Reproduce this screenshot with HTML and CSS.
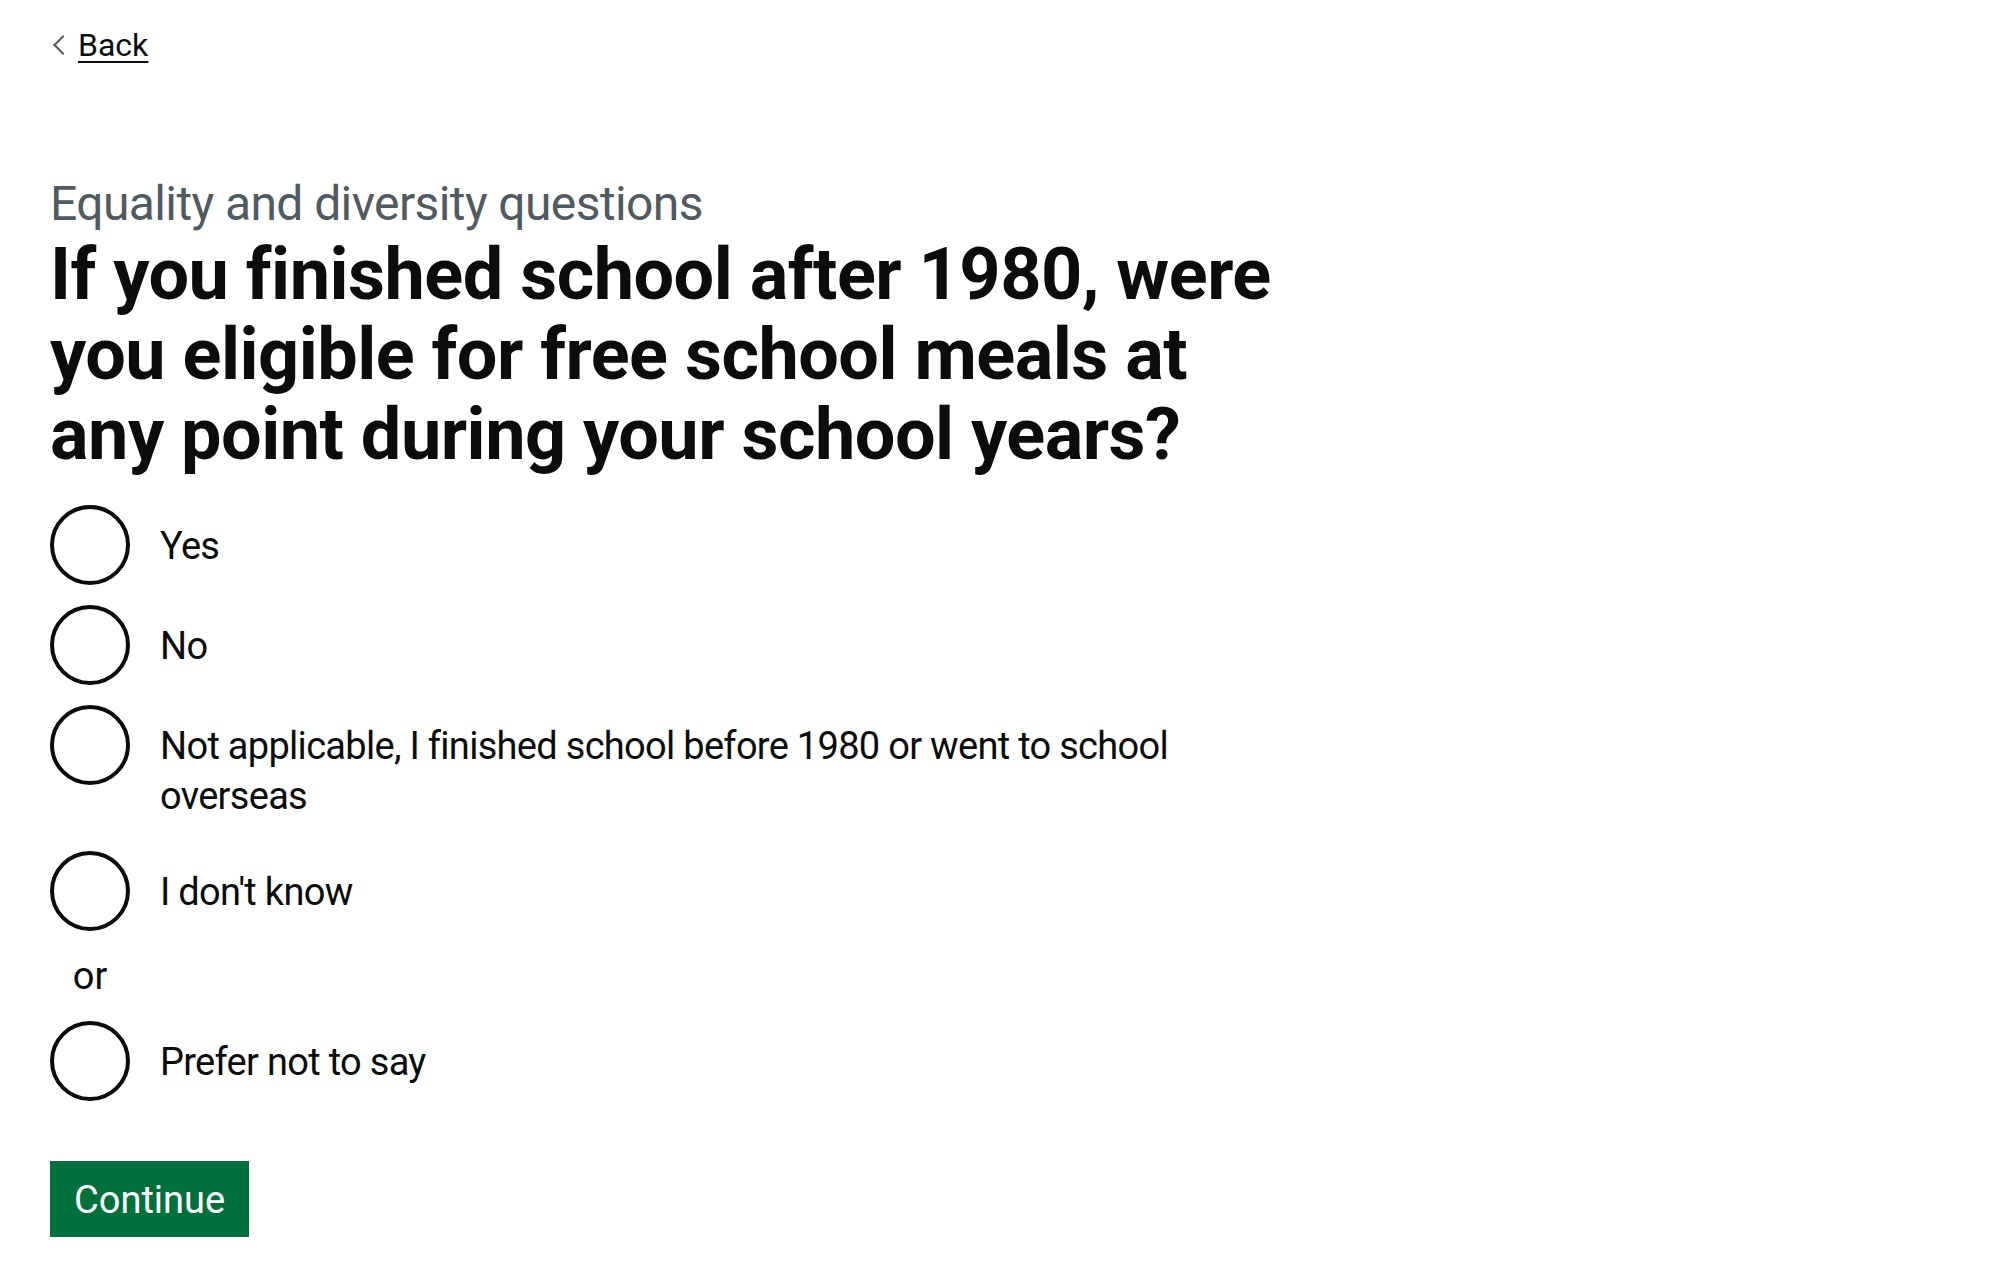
FILE: index.html
```html
<!DOCTYPE html>
<html lang="en">
<head>
<meta charset="utf-8">
<title>Equality and diversity questions</title>
<link rel="stylesheet" href="styles.css">
</head>
<body>
<div class="page">
  <a class="back-link" href="#">Back</a>
  <main class="main">
    <form class="column">
      <fieldset class="fieldset">
        <legend class="legend">
          <span class="caption">Equality and diversity questions</span>
          <h1 class="heading">If you finished school after 1980, were you eligible for free school meals at any point during your school years?</h1>
        </legend>
        <div class="radios">
          <div class="radio-item">
            <input class="radio-input" type="radio" id="fsm-yes" name="fsm" value="yes">
            <label class="radio-label" for="fsm-yes">Yes</label>
          </div>
          <div class="radio-item">
            <input class="radio-input" type="radio" id="fsm-no" name="fsm" value="no">
            <label class="radio-label" for="fsm-no">No</label>
          </div>
          <div class="radio-item">
            <input class="radio-input" type="radio" id="fsm-na" name="fsm" value="na">
            <label class="radio-label" for="fsm-na">Not applicable, I finished school before 1980 or went to school overseas</label>
          </div>
          <div class="radio-item">
            <input class="radio-input" type="radio" id="fsm-dk" name="fsm" value="dk">
            <label class="radio-label" for="fsm-dk">I don't know</label>
          </div>
          <div class="radio-divider">or</div>
          <div class="radio-item">
            <input class="radio-input" type="radio" id="fsm-pnts" name="fsm" value="pnts">
            <label class="radio-label" for="fsm-pnts">Prefer not to say</label>
          </div>
        </div>
      </fieldset>
      <button class="button" type="submit">Continue</button>
    </form>
  </main>
</div>
</body>
</html>
```

FILE: styles.css
```css
html, body {
  margin: 0;
  padding: 0;
  background: #ffffff;
}

body {
  font-family: Roboto, "Liberation Sans", Arial, sans-serif;
  color: #0b0c0c;
}

.page {
  padding: 0 50px;
}

.back-link {
  display: inline-block;
  position: relative;
  margin-top: 25px;
  padding-left: 28px;
  font-size: 32px;
  line-height: 40px;
  color: #0b0c0c;
  text-decoration: underline;
  text-decoration-thickness: 2px;
  text-underline-offset: 5px;
}

.back-link::before {
  content: "";
  position: absolute;
  top: 0;
  bottom: 0;
  left: 6px;
  width: 14px;
  height: 14px;
  margin: auto 0;
  box-sizing: border-box;
  border-style: solid;
  border-color: #505a5f;
  border-width: 2px 2px 0 0;
  transform: rotate(225deg);
}

.main {
  padding-top: 114px;
}

.column {
  max-width: 1236px;
}

.fieldset {
  margin: 0;
  padding: 0;
  border: 0;
  min-width: 0;
}

.legend {
  padding: 0;
  margin-bottom: 30px;
}

.caption {
  display: block;
  margin-bottom: 6px;
  font-size: 48px;
  line-height: 50px;
  letter-spacing: -0.6px;
  color: #505a5f;
}

.heading {
  margin: 0;
  font-size: 72px;
  line-height: 80px;
  font-weight: 700;
  letter-spacing: -0.5px;
}

.radios {
  display: flex;
  flex-direction: column;
  margin-bottom: 60px;
}

.radio-item {
  display: flex;
  align-items: flex-start;
  margin-bottom: 20px;
}

.radio-item:last-child {
  margin-bottom: 0;
}

.radio-input {
  appearance: none;
  -webkit-appearance: none;
  flex: 0 0 auto;
  box-sizing: border-box;
  width: 80px;
  height: 80px;
  margin: 0;
  border: 4px solid #0b0c0c;
  border-radius: 50%;
  background: #ffffff;
}

.radio-label {
  padding: 16px 30px 10px;
  font-size: 38px;
  line-height: 50px;
  letter-spacing: -0.7px;
}

.radio-divider {
  width: 80px;
  margin-bottom: 20px;
  text-align: center;
  font-size: 38px;
  line-height: 50px;
}

.button {
  display: inline-block;
  margin: 0;
  padding: 16px 20px 14px;
  border: 4px solid transparent;
  border-radius: 0;
  background: #00703c;
  box-shadow: 0 4px 0 #002d18;
  color: #ffffff;
  font-family: inherit;
  font-size: 38px;
  line-height: 38px;
  cursor: pointer;
}
```
